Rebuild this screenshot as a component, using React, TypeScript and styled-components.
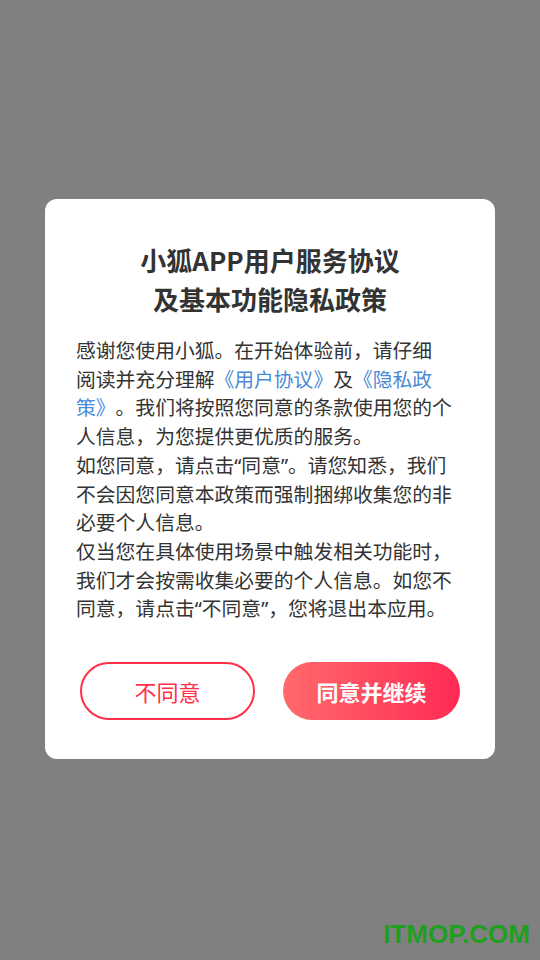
import React from 'react';
import styled, { createGlobalStyle } from 'styled-components';

const GlobalStyle = createGlobalStyle`
    html, body {
        margin: 0;
        padding: 0;
        background: #808080;
    }
    body {
        font-family: 'Noto Sans', 'Noto Sans CJK SC', sans-serif;
    }
`;

const bodyLines: { text: string; link?: boolean }[][] = [
    [{ text: '感谢您使用小狐。在开始体验前，请仔细' }],
    [
        { text: '阅读并充分理解' },
        { text: '《用户协议》', link: true },
        { text: '及' },
        { text: '《隐私政', link: true },
    ],
    [
        { text: '策》', link: true },
        { text: '。我们将按照您同意的条款使用您的个' },
    ],
    [{ text: '人信息，为您提供更优质的服务。' }],
    [{ text: '如您同意，请点击“同意”。请您知悉，我们' }],
    [{ text: '不会因您同意本政策而强制捆绑收集您的非' }],
    [{ text: '必要个人信息。' }],
    [{ text: '仅当您在具体使用场景中触发相关功能时，' }],
    [{ text: '我们才会按需收集必要的个人信息。如您不' }],
    [{ text: '同意，请点击“不同意”，您将退出本应用。' }],
];

const App: React.FC = () => (
    <>
        <GlobalStyle />
        <Screen>
            <Dialog>
                <Title>
                    <span>小狐APP用户服务协议</span>
                    <span>及基本功能隐私政策</span>
                </Title>
                <Body>
                    {bodyLines.map((line, i) => (
                        <Line key={i}>
                            {line.map((part, j) =>
                                part.link ? (
                                    <Link key={j}>{part.text}</Link>
                                ) : (
                                    <React.Fragment key={j}>{part.text}</React.Fragment>
                                )
                            )}
                        </Line>
                    ))}
                </Body>
                <Buttons>
                    <OutlineButton>不同意</OutlineButton>
                    <PrimaryButton>同意并继续</PrimaryButton>
                </Buttons>
            </Dialog>
            <Watermark>ITMOP.COM</Watermark>
        </Screen>
    </>
);

const Screen = styled.div`
    position: relative;
    width: 540px;
    height: 960px;
    display: flex;
    justify-content: center;
    padding-top: 199px;
    box-sizing: border-box;
    overflow: hidden;
`;

const Dialog = styled.div`
    width: 450px;
    height: 560px;
    box-sizing: border-box;
    background: #ffffff;
    border-radius: 12px;
    padding: 41px 0 0;
    display: flex;
    flex-direction: column;
`;

const Title = styled.h1`
    margin: 0;
    display: flex;
    flex-direction: column;
    align-items: center;
    font-family: 'Noto Sans CJK SC', sans-serif;
    font-size: 26px;
    font-weight: 700;
    line-height: 39px;
    color: #333333;
`;

const Body = styled.div`
    margin-top: 19px;
    padding: 0 31px;
    font-family: 'Noto Sans', 'Noto Sans CJK SC', sans-serif;
    font-size: 19.8px;
    line-height: 28.7px;
    color: #333333;
    text-spacing-trim: space-all;
`;

const Line = styled.div`
    white-space: nowrap;
`;

const Link = styled.span`
    color: #4a8ad6;
`;

const Buttons = styled.div`
    margin-top: 38px;
    padding: 0 35px;
    display: flex;
    gap: 28px;
`;

const ButtonBase = styled.div<{ $width: number }>`
    width: ${(p) => p.$width}px;
    height: 58px;
    box-sizing: border-box;
    border-radius: 29px;
    display: flex;
    align-items: center;
    justify-content: center;
    font-family: 'Noto Sans CJK SC', sans-serif;
    font-size: 22px;
`;

const OutlineButton = styled(ButtonBase).attrs({ $width: 175 })`
    border: 2px solid #ff3048;
    color: #ff3048;
`;

const PrimaryButton = styled(ButtonBase).attrs({ $width: 177 })`
    background: linear-gradient(90deg, #ff6a6b 0%, #ff2a55 100%);
    color: #ffffff;
    font-weight: 700;
`;

const Watermark = styled.div`
    position: absolute;
    right: 10px;
    bottom: 10px;
    font-family: 'Liberation Sans', Arial, sans-serif;
    font-weight: 700;
    font-size: 26px;
    color: #1f9f1f;
`;

export default App;
